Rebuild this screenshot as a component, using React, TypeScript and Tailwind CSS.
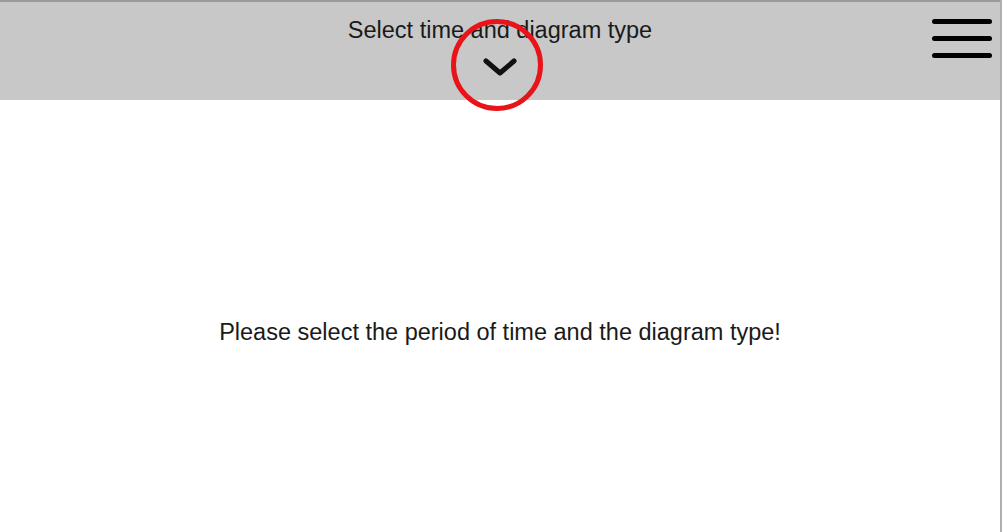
import React from 'react';

export default function App() {
  return (
    <div className="w-[1002px] h-[532px] bg-white overflow-hidden font-['Liberation_Sans',Arial,sans-serif] text-[#1a1a1a]">
      <div className="h-full border-r-2 border-[#a9b0b6] flex flex-col">
        {/* header */}
        <header className="relative h-[100px] bg-[#c8c8c8] border-t-2 border-[#9a9a9a] flex flex-col items-center">
          <p className="mt-[14px] text-[23.5px] leading-[28px]">Select time and diagram type</p>
          <div className="relative mt-[8px] w-[36px] h-[30px] flex items-center justify-center">
            <svg width="36" height="20" viewBox="0 0 36 20">
              <path d="M4 4 L18 16 L32 4" fill="none" stroke="#111" strokeWidth="5" strokeLinecap="round" strokeLinejoin="round" />
            </svg>
            {/* red circle overlay */}
            <div className="absolute left-1/2 top-1/2 -translate-x-1/2 -translate-y-1/2 -ml-[3px] -mt-[2px] w-[92px] h-[92px] rounded-full border-[5px] border-[#e8141a]" />
          </div>
          <button className="absolute right-[8px] top-[17px] flex flex-col gap-[12px]">
            <span className="block w-[60px] h-[5px] rounded-full bg-black" />
            <span className="block w-[60px] h-[5px] rounded-full bg-black" />
            <span className="block w-[60px] h-[5px] rounded-full bg-black" />
          </button>
        </header>

        <main className="flex-1 flex items-center justify-center pt-[32px]">
          <p className="text-[23.5px] leading-[28px]">Please select the period of time and the diagram type!</p>
        </main>
      </div>
    </div>
  );
}
